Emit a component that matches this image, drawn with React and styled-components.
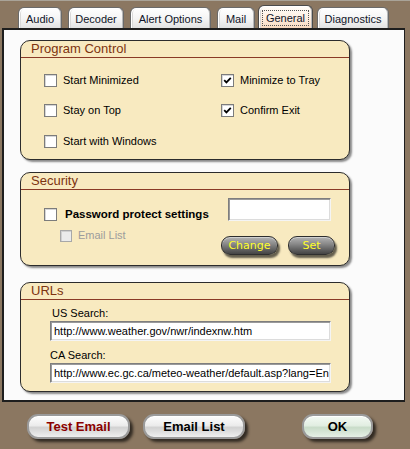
import React from 'react';
import styled, { createGlobalStyle, css } from 'styled-components';

const Global = createGlobalStyle`
  html, body { margin: 0; padding: 0; background: #8b7761; }
  body { font-family: "Liberation Sans", Arial, sans-serif; }
  * { box-sizing: border-box; }
`;

const Window = styled.div`
  width: 410px;
  height: 449px;
  background: #8b7761;
  border-top: 1px solid #a9a398;
  display: flex;
  flex-direction: column;
  overflow: hidden;
`;

const TabStrip = styled.div`
  height: 27px;
  display: flex;
  align-items: flex-end;
  gap: 6px;
  padding-left: 18px;
`;

const Tab = styled.div`
  width: ${p => p.$w}px;
  height: 21px;
  border: 1px solid #6a6a6a;
  border-bottom: none;
  border-radius: 6px 6px 0 0;
  background: linear-gradient(#ffffff, #f4f4f4 55%, #e2e2e2);
  box-shadow: inset 1px 1px 0 #ffffff, inset -1px 0 0 #b8b8b8, inset 2px 0 0 #d8d8d8;
  font-size: 11px;
  color: #101428;
  display: flex;
  align-items: center;
  justify-content: center;
  padding-top: 1px;
  ${p => p.$active && css`
    height: 23px;
    margin: 0 -2px 0 -3px;
    border-color: #4a4a4a;
    background: linear-gradient(#fffdf9, #fdf0e4 50%, #f8d9bf);
    position: relative;
    z-index: 1;
  `}
`;

const FocusText = styled.span`
  outline: 1px dotted #555;
  outline-offset: 1px;
  padding: 0 2px;
`;

const Panel = styled.div`
  margin-left: 2px;
  width: 403px;
  height: 374px;
  background: #fbfbfb;
  border: 2px solid #1e1e1e;
  border-right-width: 1px;
  padding: 10px 0 0 16px;
  display: flex;
  flex-direction: column;
`;

const GroupBox = styled.div`
  width: 330px;
  height: ${p => p.$h}px;
  margin-top: ${p => p.$mt || 0}px;
  background: #f8eac0;
  border: 1px solid #2c2c2c;
  border-radius: 10px;
  box-shadow: 2px 2px 2px rgba(0, 0, 0, 0.45);
  display: flex;
  flex-direction: column;
`;

const GroupTitle = styled.div`
  height: 17px;
  border-bottom: 1px solid #8a3a26;
  padding-left: 10px;
  font-size: 13px;
  line-height: 16px;
  color: #7d3410;
`;

const CheckGrid = styled.div`
  display: grid;
  grid-template-columns: 177px auto;
  grid-auto-rows: 13px;
  row-gap: 17.5px;
  padding: 15.5px 0 0 23px;
`;

const CheckRow = styled.label`
  display: flex;
  align-items: center;
  gap: ${p => p.$gap || 6}px;
  height: 13px;
  line-height: 13px;
  margin-left: ${p => p.$indent || 0}px;
  font-size: ${p => (p.$bold ? 11.5 : 11)}px;
  font-weight: ${p => (p.$bold ? 700 : 400)};
  color: ${p => (p.$disabled ? '#9c9c9c' : '#000')};
  white-space: nowrap;
`;

const Box = styled.span`
  width: ${p => p.$size || 13}px;
  height: ${p => p.$size || 13}px;
  flex: none;
  background: ${p => (p.$disabled ? '#ebebeb' : '#fff')};
  border: 1px solid ${p => (p.$disabled ? '#a8a8a8' : '#7c7c7c')};
  box-shadow: inset 1px 1px 0 ${p => (p.$disabled ? '#d0d0d0' : '#d6d6d6')};
  display: flex;
  align-items: center;
  justify-content: center;
`;

const Check = ({ checked, disabled, size }) => (
  <Box $disabled={disabled} $size={size}>
    {checked && (
      <svg width="11" height="11" viewBox="0 0 11 11">
        <path d="M2.2 5.2 L4.4 7.4 L8.8 2.8" fill="none" stroke="#000" strokeWidth="1.8" />
      </svg>
    )}
  </Box>
);

const SecurityBody = styled.div`
  display: flex;
`;

const SecLeft = styled.div`
  width: 200px;
  padding: 18px 0 0 23px;
  display: flex;
  flex-direction: column;
  gap: 8px;
`;

const SecRight = styled.div`
  display: flex;
  flex-direction: column;
  padding-top: 8px;
`;

const TextInput = styled.div`
  width: ${p => p.$w}px;
  height: ${p => p.$h}px;
  margin-left: ${p => p.$ml || 0}px;
  background: #fff;
  border-top: 1px solid #7e7e7e;
  border-left: 1px solid #7e7e7e;
  border-right: 1px solid #f4f4f4;
  border-bottom: 1px solid #f4f4f4;
  box-shadow: inset 1px 1px 0 #9a9a9a, inset -1px -1px 0 #dcdcdc;
  font-size: 11px;
  line-height: ${p => p.$h - 2}px;
  padding-left: 3px;
  white-space: nowrap;
  overflow: hidden;
  color: #000;
`;

const SmallButtons = styled.div`
  display: flex;
  gap: 10px;
  margin-top: 15px;
`;

const DarkButton = styled.div`
  width: ${p => p.$w}px;
  height: 19px;
  border: 1px solid #2e2e2e;
  border-radius: 9px;
  background: linear-gradient(#b4b4b4, #8a8a8a 40%, #5a5a5a 80%, #444);
  box-shadow: 2px 3px 2px rgba(0, 0, 0, 0.6), inset 0 1px 0 #d0d0d0;
  color: #ffff2a;
  font-family: "DejaVu Sans", Verdana, sans-serif;
  font-size: 11px;
  display: flex;
  align-items: center;
  justify-content: center;
`;

const UrlBody = styled.div`
  display: flex;
  flex-direction: column;
  padding: 7px 0 0 29px;
`;

const FieldLabel = styled.div`
  font-size: 11px;
  line-height: 13px;
  color: #000;
  margin: ${p => p.$mt || 0}px 0 1px ${p => p.$ml || 0}px;
`;

const Footer = styled.div`
  display: flex;
  padding: 12px 0 0 27px;
`;

const PillButton = styled.div`
  width: ${p => p.$w}px;
  height: 25px;
  margin-left: ${p => p.$ml || 0}px;
  border: 2px solid #9a9a9a;
  border-radius: 11px;
  background: ${p => (p.$green
    ? 'linear-gradient(#f4faf4, #e2eee2 45%, #c9dcc9 55%, #e6f0e6)'
    : 'linear-gradient(#fdfdfd, #ececec 45%, #d2d2d2 55%, #efefef)')};
  box-shadow: 3px 3px 3px rgba(0, 0, 0, 0.65), inset 0 1px 0 #fff;
  color: ${p => p.$color || '#000'};
  font-size: 13px;
  font-weight: 700;
  display: flex;
  align-items: center;
  justify-content: center;
`;

export default function App() {
  return (
    <>
      <Global />
      <Window>
        <TabStrip>
          <Tab $w={44}>Audio</Tab>
          <Tab $w={56}>Decoder</Tab>
          <Tab $w={81}>Alert Options</Tab>
          <Tab $w={38}>Mail</Tab>
          <Tab $w={55} $active><FocusText>General</FocusText></Tab>
          <Tab $w={72}>Diagnostics</Tab>
        </TabStrip>
        <Panel>
          <GroupBox $h={120}>
            <GroupTitle>Program Control</GroupTitle>
            <CheckGrid>
              <CheckRow><Check />Start Minimized</CheckRow>
              <CheckRow><Check checked />Minimize to Tray</CheckRow>
              <CheckRow><Check />Stay on Top</CheckRow>
              <CheckRow><Check checked />Confirm Exit</CheckRow>
              <CheckRow><Check />Start with Windows</CheckRow>
            </CheckGrid>
          </GroupBox>

          <GroupBox $h={94} $mt={12}>
            <GroupTitle>Security</GroupTitle>
            <SecurityBody>
              <SecLeft>
                <CheckRow $bold $gap={8}><Check />Password protect settings</CheckRow>
                <CheckRow $disabled $indent={16}><Check disabled size={12} />Email List</CheckRow>
              </SecLeft>
              <SecRight>
                <TextInput $w={103} $h={23} $ml={7} />
                <SmallButtons>
                  <DarkButton $w={57}>Change</DarkButton>
                  <DarkButton $w={47}>Set</DarkButton>
                </SmallButtons>
              </SecRight>
            </SecurityBody>
          </GroupBox>

          <GroupBox $h={110} $mt={16}>
            <GroupTitle>URLs</GroupTitle>
            <UrlBody>
              <FieldLabel $ml={2}>US Search:</FieldLabel>
              <TextInput $w={281} $h={20}>http://www.weather.gov/nwr/indexnw.htm</TextInput>
              <FieldLabel $mt={8}>CA Search:</FieldLabel>
              <TextInput $w={281} $h={20}>http://www.ec.gc.ca/meteo-weather/default.asp?lang=En</TextInput>
            </UrlBody>
          </GroupBox>
        </Panel>
        <Footer>
          <PillButton $w={103} $color="#8b0000">Test Email</PillButton>
          <PillButton $w={102} $ml={13}>Email List</PillButton>
          <PillButton $w={71} $ml={57} $green>OK</PillButton>
        </Footer>
      </Window>
    </>
  );
}
